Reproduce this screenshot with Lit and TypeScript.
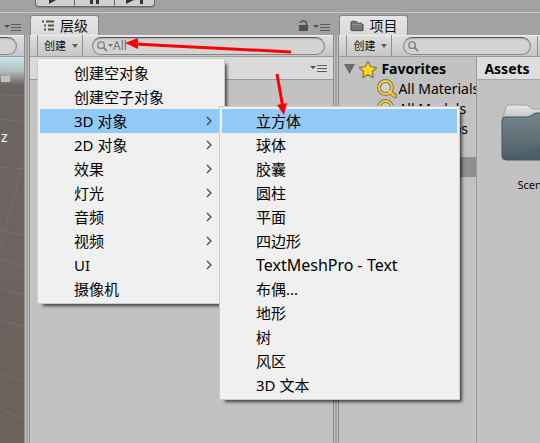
import { LitElement, html, svg, css, nothing } from "lit";
import { customElement, property } from "lit/decorators.js";

interface MenuEntry {
  label: string;
  latin?: boolean;
  children?: MenuEntry[];
  opens?: boolean;
}

const objectMenu: MenuEntry[] = [
  { label: "创建空对象" },
  { label: "创建空子对象" },
  {
    label: "3D 对象",
    opens: true,
    children: [
      { label: "立方体" },
      { label: "球体" },
      { label: "胶囊" },
      { label: "圆柱" },
      { label: "平面" },
      { label: "四边形" },
      { label: "TextMeshPro - Text", latin: true },
      { label: "布偶..." },
      { label: "地形" },
      { label: "树" },
      { label: "风区" },
      { label: "3D 文本" },
    ],
  },
  { label: "2D 对象", opens: true },
  { label: "效果", opens: true },
  { label: "灯光", opens: true },
  { label: "音频", opens: true },
  { label: "视频", opens: true },
  { label: "UI", opens: true },
  { label: "摄像机" },
];

const paneMenuIcon = html`<svg width="18" height="8" viewBox="0 0 18 8">
  <path d="M0 2h6L3 5z" fill="#4c4c4c" />
  <path d="M7 1.500h10M7 4.500h10M7 7.500h10" stroke="#5c5c5c" />
</svg>`;

const caretIcon = html`<svg width="6" height="4" viewBox="0 0 6 4">
  <path d="M0 0h6L3 4z" fill="#606060" />
</svg>`;

const lockShapes = svg`
  <rect x="0" y="5" width="9" height="6" stroke="none" />
  <path d="M1.500 3V2.500Q2 1 4.500 1T7.500 3V5" fill="none" stroke-width="1.500" />`;

const searchIcon = html`<svg width="11" height="11" viewBox="0 0 12 12">
  <circle cx="4.500" cy="4.500" r="3.500" fill="none" stroke="#808080" stroke-width="1.500" />
  <path d="M7 7l4 4" stroke="#808080" stroke-width="2" />
</svg>`;

const lensIcon = html`<svg width="20" height="20" viewBox="0 0 20 20">
  <path d="M12 12l6 5" stroke="#77736a" stroke-width="4.500" stroke-linecap="round" />
  <circle cx="8.500" cy="8.500" r="6.500" fill="#d2d2c8" stroke="#77736a" stroke-width="4" />
  <path d="M12.500 12.500l5 4.500" stroke="#f4c40e" stroke-width="3" stroke-linecap="round" />
  <circle cx="8.500" cy="8.500" r="6.500" fill="none" stroke="#f7d433" stroke-width="2" />
</svg>`;

@customElement("context-menu")
class ContextMenu extends LitElement {
  @property({ attribute: false }) entries: MenuEntry[] = [];
  @property({ type: Number }) active = -1;

  static styles = css`
    :host {
      display: block;
      position: absolute;
      z-index: 5;
    }
    .list {
      margin: 0;
      padding: 2px;
      list-style: none;
      background: #f0f0f0;
      border: 1px solid #cccccc;
      box-shadow: 4px 4px 3px -2px rgba(0, 0, 0, 0.65);
    }
    .entry {
      position: relative;
    }
    .item {
      display: flex;
      align-items: center;
      justify-content: space-between;
      width: 100%;
      height: 24px;
      padding: 0 10px 0 34px;
      border: 0;
      background: transparent;
      color: #000;
      font: 15px/24px "Noto Sans", "Noto Sans CJK SC", sans-serif;
      white-space: nowrap;
      text-align: left;
    }
    .latin {
      font-size: 16px;
    }
    .active {
      background: #91c9f7;
    }
    .sub {
      left: 179px;
      top: -3px;
      width: 241px;
    }
  `;

  render() {
    return html`<ul class="list" role="menu">
      ${this.entries.map(
        (entry, index) => html`<li class="entry" role="none">
          <button
            class="item ${index === this.active ? "active" : ""} ${entry.latin ? "latin" : ""}"
            role="menuitem"
          >
            <span>${entry.label}</span>
            ${entry.opens
              ? html`<svg width="6" height="10" viewBox="0 0 6 10">
                  <path d="M1 1l4 4-4 4" fill="none" stroke="#404040" stroke-width="1.200" />
                </svg>`
              : nothing}
          </button>
          ${entry.children
            ? html`<context-menu class="sub" .entries=${entry.children} .active=${0}></context-menu>`
            : nothing}
        </li>`
      )}
    </ul>`;
  }
}

@customElement("app-root")
class AppRoot extends LitElement {
  static styles = css`
    :host {
      display: flex;
      flex-direction: column;
      position: relative;
      height: 100vh;
      overflow: hidden;
      background: #a2a2a2;
      color: #000;
      font: 14px/20px "Noto Sans", "Noto Sans CJK SC", sans-serif;
    }
    * {
      box-sizing: border-box;
    }
    svg {
      display: block;
      flex: none;
    }
    button {
      font-family: inherit;
    }
    .playbar {
      display: flex;
      flex: none;
      align-items: flex-start;
      height: 13px;
      padding-left: 35px;
      border-bottom: 1px solid #c6c6c6;
    }
    .play {
      display: flex;
      justify-content: center;
      width: 40px;
      height: 7px;
      padding: 0;
      border: 1px solid #6a6a6a;
      border-top: 0;
      border-left: 0;
      background: #cfcfcf;
      box-shadow: 0 1px 0 #858585;
    }
    .play:first-child {
      border-left: 1px solid #6a6a6a;
      border-bottom-left-radius: 4px;
    }
    .play:last-child {
      border-bottom-right-radius: 4px;
    }
    .workspace {
      display: grid;
      flex: 1;
      grid-template-columns: 24px minmax(0, 304fr) minmax(0, 201fr);
      column-gap: 6px;
      min-height: 0;
    }
    .panel {
      display: flex;
      flex-direction: column;
      min-width: 0;
      box-shadow: -1px 0 0 #8a8a8a, 1px 0 0 #8a8a8a, -2px 0 0 #c0c0c0, 2px 0 0 #c0c0c0;
    }
    .tabs {
      display: flex;
      flex: none;
      align-items: flex-end;
      gap: 4px;
      height: 22px;
      background: #a2a2a2;
      box-shadow: -3px 0 0 #a2a2a2, 3px 0 0 #a2a2a2;
    }
    .tab {
      display: flex;
      align-items: center;
      gap: 5px;
      height: 20px;
      padding: 0 10px;
      border: 1px solid #868686;
      border-bottom: 0;
      border-radius: 3px 3px 0 0;
      background: linear-gradient(#e6e6e6, #dadada);
      color: #111;
      line-height: 18px;
    }
    .spacer {
      flex: 1;
    }
    .tabs > svg {
      margin-bottom: 3px;
    }
    .pane-menu {
      padding: 0 2px 4px 0;
    }
    .scene-menu {
      padding: 0 2px 4px 4px;
    }
    .toolbar {
      display: flex;
      flex: none;
      align-items: center;
      height: 22px;
      padding: 0 8px 0 7px;
      border-top: 1px solid #eeeeee;
      border-bottom: 1px solid #9c9c9c;
      background: linear-gradient(#dedede, #c6c6c6);
    }
    .anchor {
      position: relative;
      z-index: 4;
      height: 22px;
      margin-right: 9px;
    }
    .create {
      display: flex;
      align-items: center;
      gap: 6px;
      width: 46px;
      height: 21px;
      padding: 0 4px 0 6px;
      border: solid #8f8f8f;
      border-width: 0 1px;
      background: transparent;
      color: #111;
      font-size: 11px;
      line-height: 20px;
    }
    .root-menu {
      left: 0;
      top: 23px;
      width: 188px;
    }
    .search {
      display: flex;
      flex: 1;
      align-items: center;
      min-width: 0;
      height: 18px;
      padding-left: 4px;
      border: 1px solid #858585;
      border-top-color: #5e5e5e;
      border-radius: 9px;
      background: #d3d3d3;
      box-shadow: inset 0 1px 1px #a8a8a8;
    }
    .search input {
      flex: 1;
      min-width: 0;
      height: 16px;
      padding: 0;
      border: 0;
      outline: 0;
      background: transparent;
      font: 12px/16px "Noto Sans", sans-serif;
    }
    .search input::placeholder {
      color: #707070;
      opacity: 1;
    }
    .scene-bar {
      padding: 0 7px 0 0;
    }
    .scene-search {
      border-left: 0;
      border-radius: 0 9px 9px 0;
      padding: 0;
    }
    .viewport {
      display: flex;
      flex: 1;
      flex-direction: column;
      position: relative;
      overflow: hidden;
      background: linear-gradient(#c4e6ea 0, #b0c0c0 14px, #6b6562 28px, #6b625d 100%);
      color: #fff;
      line-height: 16px;
    }
    .viewport .lock {
      margin: 14px 0 0 1px;
    }
    .axis {
      margin: 46px 0 0 1px;
    }
    .grid {
      position: absolute;
      inset: 0;
    }
    .body {
      flex: 1;
      min-height: 0;
      background: #c2c2c2;
    }
    .scene-row {
      display: flex;
      align-items: center;
      justify-content: flex-end;
      height: 23px;
      padding-right: 5px;
      border-bottom: 1px solid #999;
      background: #dadada;
    }
    .project-toolbar {
      padding-right: 2px;
    }
    .project-toolbar .search {
      margin-right: 6px;
    }
    .project-toolbar .anchor {
      margin-right: 11px;
      z-index: 0;
    }
    .divider {
      height: 21px;
      border-left: 1px solid #8f8f8f;
    }
    .browser {
      display: grid;
      grid-template-columns: 138px minmax(0, 1fr);
      overflow: hidden;
    }
    .tree {
      padding-top: 2px;
      overflow: hidden;
      border-right: 1px solid #999;
    }
    .row {
      display: flex;
      align-items: center;
      gap: 1px;
      height: 20px;
      padding-left: 38px;
      white-space: nowrap;
    }
    .favorites {
      gap: 3px;
      padding-left: 5px;
      font-weight: 700;
    }
    .selected {
      margin-top: 18px;
      background: #8f8f8f;
    }
    .crumb {
      height: 23px;
      padding-left: 7px;
      border-bottom: 1px solid #a8a8a8;
      background: #dedede;
      font-weight: 700;
      line-height: 24px;
    }
    .asset {
      display: flex;
      flex-direction: column;
      align-items: center;
      gap: 12px;
      width: 68px;
      margin: 23px 0 0 24px;
      font-size: 11px;
      line-height: 20px;
    }
    .marks {
      position: absolute;
      left: 0;
      top: 0;
      z-index: 9;
      pointer-events: none;
    }
  `;

  private createButton() {
    return html`<button class="create"><span>创建</span>${caretIcon}</button>`;
  }

  private hierarchy() {
    return html`<section class="panel">
      <div class="tabs">
        <div class="tab">
          <svg width="14" height="14" viewBox="0 0 14 14">
            <path d="M1 2.500h3M3 6.500h3M3 10.500h3" stroke="#555" stroke-width="2" stroke-dasharray="2 1" />
            <path d="M5 2.500h8M7 6.500h6M7 10.500h6" stroke="#555" stroke-width="2" />
          </svg>
          <span>层级</span>
        </div>
        <span class="spacer"></span>
        <svg width="10" height="12" viewBox="0 0 10 12" fill="#505050" stroke="#505050">${lockShapes}</svg>
        <span class="pane-menu">${paneMenuIcon}</span>
      </div>
      <div class="toolbar">
        <div class="anchor">
          ${this.createButton()}
          <context-menu class="root-menu" .entries=${objectMenu} .active=${2}></context-menu>
        </div>
        <label class="search">
          ${searchIcon}
          <svg width="5" height="4" viewBox="0 0 5 4"><path d="M0 0h5L2.500 3z" fill="#707070" /></svg>
          <input type="text" aria-label="搜索层级" placeholder="All" />
        </label>
      </div>
      <div class="body">
        <div class="scene-row">${paneMenuIcon}</div>
      </div>
    </section>`;
  }

  private project() {
    return html`<section class="panel">
      <div class="tabs">
        <div class="tab">
          <svg width="14" height="12" viewBox="0 0 15 12">
            <path d="M1 10V2.500Q1 1 2.500 1H6Q7.500 1 8 3H12.500V4.500H14V11H2Q1 11 1 10z" fill="#777" stroke="#484848" />
            <path d="M2.500 4.500H12" stroke="#999" />
          </svg>
          <span>项目</span>
        </div>
      </div>
      <div class="toolbar project-toolbar">
        <div class="anchor">${this.createButton()}</div>
        <label class="search">${searchIcon}<input type="text" aria-label="搜索项目" /></label>
        <span class="divider"></span>
      </div>
      <div class="body browser">
        <div class="tree">
          <div class="row favorites">
            <svg width="11" height="10" viewBox="0 0 11 10"><path d="M0 0h11L5.500 10z" fill="#6c6c6c" /></svg>
            <svg width="20" height="19" viewBox="0 0 20 19">
              <path
                d="M10 1.500l2.600 5.300 5.900.8-4.300 4.100 1 5.800-5.200-2.800-5.200 2.800 1-5.800L1.500 7.600l5.900-.8z"
                fill="#ffd51c" stroke="#8c7f4a" stroke-width="1.500" stroke-linejoin="round" />
              <path
                d="M10 3l2.200 4.300 4.700.7-3.400 3.300.8 4.400-4.300-2.200-4.300 2.200.8-4.400L3.100 8l4.700-.7z"
                fill="#ffd51c" />
            </svg>
            <span>Favorites</span>
          </div>
          ${["All Materials", "All Models", "All Prefabs"].map(
            (name) => html`<div class="row">${lensIcon}<span>${name}</span></div>`
          )}
          <div class="row selected"></div>
        </div>
        <div>
          <div class="crumb">Assets</div>
          <div class="asset">
            <svg width="68" height="60" viewBox="0 0 68 60">
              <defs>
                <linearGradient id="front" x1="0" y1="0" x2="0" y2="1">
                  <stop offset="0" stop-color="#76868d" />
                  <stop offset="1" stop-color="#4c5e66" />
                </linearGradient>
                <linearGradient id="back" x1="0" y1="0" x2="0" y2="1">
                  <stop offset="0" stop-color="#e9e9e9" />
                  <stop offset="1" stop-color="#b4b4b4" />
                </linearGradient>
              </defs>
              <path d="M2 14L5 4Q6 2 8 2H24Q27 2 29 4T33 6H62Q66 6 66 10V20H2z" fill="url(#back)" stroke="#a0a0a0" />
              <path
                d="M1 18Q1 14 4 14H26Q29 14 31 12T36 10H63Q67 10 67 14V53Q67 57 63 57H5Q1 57 1 53z"
                fill="url(#front)" stroke="#46555c" />
              <path d="M2 54Q3 56 5 56H63Q66 56 66 54V26Q34 50 2 54z" fill="#42545c" opacity=".2" />
            </svg>
            <span>Scenes</span>
          </div>
        </div>
      </div>
    </section>`;
  }

  render() {
    return html`
      <header class="playbar">
        <button class="play" aria-label="播放">
          <svg width="14" height="6" viewBox="0 0 14 6"><path d="M1 0h7L1 4z" fill="#333" /></svg>
        </button>
        <button class="play" aria-label="暂停">
          <svg width="12" height="6" viewBox="0 0 12 6"><path d="M1 0h3v4H1zM7 0h3v4H7z" fill="#333" /></svg>
        </button>
        <button class="play" aria-label="逐帧">
          <svg width="18" height="6" viewBox="0 0 18 6"><path d="M0 0h8L0 4zM14 0h3v4h-3z" fill="#333" /></svg>
        </button>
      </header>
      <main class="workspace">
        <section class="panel">
          <div class="tabs"><span class="scene-menu">${paneMenuIcon}</span></div>
          <div class="toolbar scene-bar"><div class="search scene-search"></div></div>
          <div class="viewport">
            <svg class="grid" width="24" height="400" fill="none" stroke="#7e7976">
              <path d="M0 38l24 1M0 62l24 3M0 110l24 2M0 173l24 5M0 202l24 7M0 230l24 8M0 262l24 8M0 316l24 9M0 352l24 10M0 188Q10 158 24 100" opacity=".6" />
            </svg>
            <svg class="lock" width="9" height="12" viewBox="0 0 9 12" fill="#c2c2c2" stroke="#b4b4b4">${lockShapes}</svg>
            <span class="axis">z</span>
          </div>
        </section>
        ${this.hierarchy()} ${this.project()}
      </main>
      <svg class="marks" width="540" height="130" fill="none" stroke="#fb0007" stroke-width="3">
        <path d="M291 52L134 44M277 74l6 34" />
        <path d="M125 43l13-5v11zM284 115l-7-10 10-2z" fill="#fb0007" stroke="none" />
      </svg>
    `;
  }
}
